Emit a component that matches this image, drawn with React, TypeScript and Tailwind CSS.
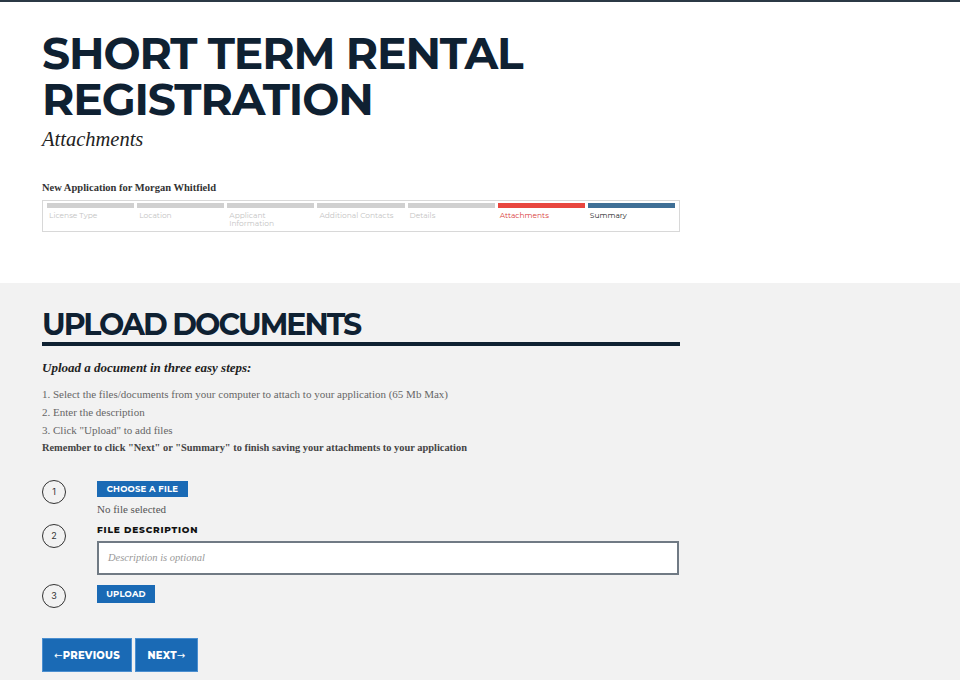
import React from 'react';

const steps = [
  { label: 'License Type', state: 'done' },
  { label: 'Location', state: 'done' },
  { label: 'Applicant Information', state: 'done' },
  { label: 'Additional Contacts', state: 'done' },
  { label: 'Details', state: 'done' },
  { label: 'Attachments', state: 'current' },
  { label: 'Summary', state: 'next' },
];

const sans = 'font-["Montserrat","Inter",sans-serif]';
const serif = 'font-["Liberation_Serif","Times_New_Roman",serif]';

const StepCircle: React.FC<{ n: number }> = ({ n }) => (
  <div className="w-[24px] h-[24px] rounded-full border border-[#333] flex items-center justify-center text-[9px] text-[#333] font-['Inter',sans-serif] shrink-0">
    {n}
  </div>
);

const Arrow: React.FC<{ dir: 'left' | 'right' }> = ({ dir }) => (
  <span className="font-['DejaVu_Sans',sans-serif] font-normal text-[10px]">{dir === 'left' ? '←' : '→'}</span>
);

const App: React.FC = () => {
  return (
    <div className="w-[960px] min-h-[680px] bg-[#f2f2f2]">
      {/* header */}
      <div className="bg-white border-t-2 border-[#2b3945] px-[42px] pt-[28px] pb-[51px]">
        <h1 className={`${sans} font-bold text-[#0f2132] text-[44px] leading-[46px] tracking-[-1.1px]`}>
          SHORT TERM RENTAL
          <br />
          REGISTRATION
        </h1>
        <p className={`${serif} italic text-[#222] text-[20.5px] leading-[24px] mt-[5px]`}>Attachments</p>

        <p className={`${serif} font-bold text-[#333] text-[10.5px] leading-[14px] mt-[30px]`}>
          New Application for Morgan Whitfield
        </p>
        <div className="mt-[5px] w-[638px] h-[32px] border border-[#d8d8d8] px-[4px] pt-[2px] flex gap-[3px]">
          {steps.map((s) => (
            <div key={s.label} className="flex-1">
              <div
                className={`h-[5px] ${
                  s.state === 'current' ? 'bg-[#e8463f]' : s.state === 'next' ? 'bg-[#3f6f96]' : 'bg-[#d0d0d0]'
                }`}
              />
              <div
                className={`${sans} text-[7.5px] leading-[8px] mt-[4px] pl-[2px] w-[80px] ${
                  s.state === 'current' ? 'text-[#d9403a]' : s.state === 'next' ? 'text-[#222]' : 'text-[#c4c4c4]'
                }`}
              >
                {s.label}
              </div>
            </div>
          ))}
        </div>
      </div>

      {/* upload section */}
      <div className="px-[42px] pt-[26px] pb-[8px]">
        <h2 className={`${sans} font-bold text-[#0f2132] text-[30px] leading-[32px] w-[638px] border-b-[4px] border-[#0f2132] pb-[1px] tracking-[-2px]`}>
          UPLOAD DOCUMENTS
        </h2>
        <p className={`${serif} italic font-bold text-[#222] text-[13px] leading-[18px] mt-[13px]`}>
          Upload a document in three easy steps:
        </p>
        <div className={`${serif} text-[#666] text-[11px] leading-[18px] mt-[8px]`}>
          <p>1. Select the files/documents from your computer to attach to your application (65 Mb Max)</p>
          <p>2. Enter the description</p>
          <p>3. Click "Upload" to add files</p>
        </div>
        <p className={`${serif} font-bold text-[#444] text-[10.4px] leading-[18px]`}>
          Remember to click "Next" or "Summary" to finish saving your attachments to your application
        </p>

        <div className="mt-[23px] flex flex-col">
          <div className="flex items-start gap-[31px]">
            <StepCircle n={1} />
            <div className="pt-[1px]">
              <button className={`${sans} block bg-[#1a6ab5] text-white text-[8.5px] font-bold tracking-[0.2px] h-[16px] w-[91px]`}>
                CHOOSE A FILE
              </button>
              <p className={`${serif} text-[#555] text-[11px] leading-[16px] mt-[4px]`}>No file selected</p>
            </div>
          </div>
          <div className="flex items-start gap-[31px] mt-[7px]">
            <StepCircle n={2} />
            <div className="flex-1 max-w-[582px]">
              <p className={`${sans} font-extrabold text-[#111] text-[9px] tracking-[0.8px] leading-[12px]`}>
                FILE DESCRIPTION
              </p>
              <div className="mt-[5px] h-[34px] bg-white border-2 border-[#707a84] flex items-center px-[9px]">
                <span className={`${serif} italic text-[#999] text-[10.5px]`}>Description is optional</span>
              </div>
            </div>
          </div>
          <div className="flex items-start gap-[31px] mt-[9px]">
            <StepCircle n={3} />
            <div className="pt-[1px]">
              <button className={`${sans} block bg-[#1a6ab5] text-white text-[8.5px] font-bold tracking-[0.2px] h-[18px] w-[58px]`}>
                UPLOAD
              </button>
            </div>
          </div>
        </div>

        <div className="mt-[30px] flex gap-[3px]">
          <button className={`${sans} bg-[#1a6ab5] text-white text-[10px] font-extrabold tracking-[0.3px] h-[34px] w-[90px] border border-[#4b8fd0]`}>
            <Arrow dir="left" />PREVIOUS
          </button>
          <button className={`${sans} bg-[#1a6ab5] text-white text-[10px] font-extrabold tracking-[0.3px] h-[34px] w-[63px] border border-[#4b8fd0]`}>
            NEXT<Arrow dir="right" />
          </button>
        </div>
      </div>
    </div>
  );
};

export default App;
